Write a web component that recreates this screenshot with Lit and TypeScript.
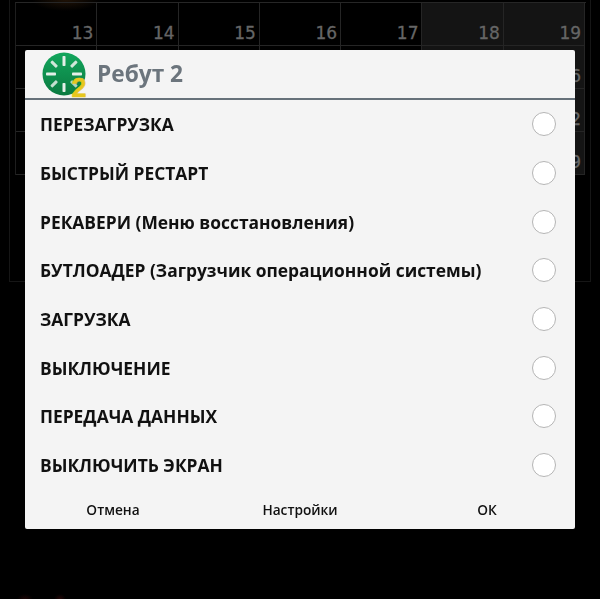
import { LitElement, html, css, svg } from "lit";
import { customElement } from "lit/decorators.js";

const ROWS: string[][] = [
  ["13", "14", "15", "16", "17", "18", "19"],
  ["20", "21", "22", "23", "24", "25", "26"],
  ["27", "28", "29", "30", "31", "1", "2"],
  ["3", "4", "5", "6", "7", "8", "9"],
];
const OPTIONS = [
  "ПЕРЕЗАГРУЗКА",
  "БЫСТРЫЙ РЕСТАРТ",
  "РЕКАВЕРИ (Меню восстановления)",
  "БУТЛОАДЕР (Загрузчик операционной системы)",
  "ЗАГРУЗКА",
  "ВЫКЛЮЧЕНИЕ",
  "ПЕРЕДАЧА ДАННЫХ",
  "ВЫКЛЮЧИТЬ ЭКРАН",
];

const spokes = [
  { a: 0, o: 1, l: 10 },
  { a: 45, o: 0.9, l: 8 },
  { a: 90, o: 1, l: 10 },
  { a: 135, o: 0.75, l: 8 },
  { a: 180, o: 1, l: 9 },
  { a: 225, o: 0.85, l: 8 },
  { a: 270, o: 1, l: 10 },
  { a: 315, o: 0.9, l: 8 },
];

@customElement("app-root")
export class AppRoot extends LitElement {
  static styles = css`
    :host {
      display: block;
      position: relative;
      width: 600px;
      height: 599px;
      overflow: hidden;
      background:
        radial-gradient(ellipse 8px 5px at 25px 599px, #1c0606, transparent),
        radial-gradient(ellipse 6px 5px at 60px 599px, #240707, transparent),
        #000;
      font-family: "Open Sans", "Noto Sans", sans-serif;
    }
    .frame {
      box-sizing: border-box;
      margin-left: 9px;
      width: 582px;
      height: 282px;
      padding: 2px 0 0 5px;
      border: 1px solid #161616;
      border-top: none;
      background: radial-gradient(ellipse 34px 11px at 56px 0, #1f1206, transparent);
    }
    .grid {
      display: grid;
      grid-template-columns: repeat(7, 81.3px);
      grid-auto-rows: 43px;
      width: 570px;
      border-top: 1px solid #262626;
      border-left: 1px solid #1e1e1e;
    }
    .cell {
      box-sizing: border-box;
      display: flex;
      align-items: flex-end;
      justify-content: flex-end;
      padding: 0 3px 0 0;
      border-right: 1px solid #252525;
      border-bottom: 1px solid #252525;
      color: #666;
      font-family: "DejaVu Sans", sans-serif;
      font-size: 17px;
      font-weight: 500;
      line-height: 24px;
      -webkit-text-stroke: 0.3px #666;
    }
    .cell.off {
      background: #141414;
    }
    .dialog {
      position: absolute;
      left: 25px;
      top: 50px;
      width: 550px;
      height: 479px;
      display: flex;
      flex-direction: column;
      background: #f4f4f4;
      border-radius: 2px;
      filter: blur(0.3px);
    }
    .head {
      box-sizing: border-box;
      height: 50px;
      flex: none;
      display: flex;
      align-items: center;
      gap: 9px;
      padding: 0 0 0 15px;
      border-bottom: 2px solid #66717a;
    }
    .logo {
      width: 48px;
      height: 48px;
      flex: none;
      overflow: visible;
    }
    .logo-digit {
      font-family: "Liberation Sans", sans-serif;
      font-size: 27px;
      font-weight: 700;
      fill: #e6c71e;
      stroke: #e6c71e;
      stroke-width: 0.6px;
    }
    .title {
      color: #6c757d;
      font-size: 22.7px;
      font-weight: 700;
      line-height: 30px;
    }
    .list {
      display: flex;
      flex-direction: column;
      flex: none;
    }
    .row {
      height: 48.7px;
      display: flex;
      align-items: center;
      justify-content: space-between;
      padding: 0 19px 0 15px;
      color: #111;
      font-size: 17.4px;
      font-weight: 700;
    }
    .radio {
      box-sizing: border-box;
      width: 24px;
      height: 24px;
      border-radius: 50%;
      border: 1.5px solid #b4b4b4;
      background: #fff;
      flex: none;
    }
    .foot {
      flex: 1;
      display: flex;
      justify-content: space-between;
      align-items: center;
      padding: 0 38px;
    }
    .btn {
      width: 100px;
      text-align: center;
      color: #111;
      font-size: 13.7px;
      font-weight: 600;
    }
  `;

  private logo() {
    return html`<svg class="logo" viewBox="0 0 48 48">
      <defs>
        <linearGradient id="g" x1="0" y1="0" x2="0" y2="1">
          <stop offset="0" stop-color="#12a65c"></stop>
          <stop offset="1" stop-color="#0b7a41"></stop>
        </linearGradient>
      </defs>
      <circle cx="24" cy="24" r="21.5" fill="url(#g)"></circle>
      ${spokes.map(
        (s) => svg`<rect x="22.5" y="6" width="3" height="${s.l}"
          rx="0.8" fill="#e4efe8" opacity="${s.o}" transform="rotate(${s.a} 24 24)"></rect>`
      )}
      <text class="logo-digit" x="31.5" y="47">2</text>
    </svg>`;
  }

  render() {
    return html`
      <div class="frame">
        <div class="grid">
          ${ROWS.map((r) =>
            r.map((d, i) => html`<div class="cell ${i >= 5 ? "off" : ""}">${d}</div>`)
          )}
        </div>
      </div>
      <div class="dialog">
        <div class="head">
          ${this.logo()}
          <div class="title">Ребут 2</div>
        </div>
        <div class="list">
          ${OPTIONS.map(
            (o) => html`<div class="row"><span>${o}</span><span class="radio"></span></div>`
          )}
        </div>
        <div class="foot">
          <div class="btn">Отмена</div>
          <div class="btn">Настройки</div>
          <div class="btn">ОК</div>
        </div>
      </div>
    `;
  }
}
